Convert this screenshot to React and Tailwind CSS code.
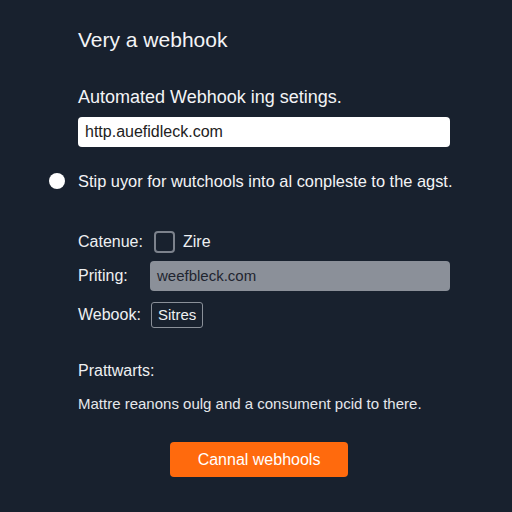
export default function App() {
  return (
    <div
      className="w-[512px] h-[512px] bg-[#18212e] text-white overflow-hidden"
      style={{ fontFamily: '"Liberation Sans", Arial, sans-serif' }}
    >
      <div className="pl-[78px] pr-[62px] pt-[28px]">
        <h1 className="text-[21px] leading-[24px] text-[#f3f4f6]">Very a webhook</h1>

        <p className="mt-[34px] text-[18px] leading-[22px] text-[#f3f4f6]">Automated Webhook ing setings.</p>
        <div className="mt-[9px] h-[30px] bg-white rounded-[4px] flex items-center px-[7px] text-[16px] text-[#222]">
          http.auefidleck.com
        </div>

        <div className="mt-[24px] -ml-[29px] flex items-center gap-[13px]">
          <span className="w-[16px] h-[16px] rounded-full bg-white shrink-0" />
          <span className="text-[16.4px] leading-[20px] whitespace-nowrap text-[#f3f4f6]">
            Stip uyor for wutchools into al conpleste to the agst.
          </span>
        </div>

        <div className="mt-[40px] flex flex-col">
          <div className="flex items-center h-[22px]">
            <span className="w-[76px] text-[16px] text-[#eef0f2]">Catenue:</span>
            <span className="w-[21px] h-[22px] rounded-[4px] border-2 border-[#7c828c]" />
            <span className="ml-[8px] text-[16px] text-[#eef0f2]">Zire</span>
          </div>
          <div className="mt-[8px] flex items-center">
            <span className="w-[72px] text-[16px] text-[#eef0f2]">Priting:</span>
            <div className="flex-1 h-[30px] rounded-[4px] bg-[#8b9099] flex items-center px-[7px] text-[15px] text-[#1f2530]">
              weefbleck.com
            </div>
          </div>
          <div className="mt-[11px] flex items-center">
            <span className="w-[73px] text-[16px] text-[#eef0f2]">Webook:</span>
            <span className="h-[26px] px-[6px] border border-[#8a9099] rounded-[3px] flex items-center text-[15px] text-[#eef0f2]">
              Sitres
            </span>
          </div>
        </div>

        <p className="mt-[33px] text-[16px] leading-[20px] text-[#eef0f2]">Prattwarts:</p>
        <p className="mt-[13px] text-[15px] leading-[20px] text-[#e5e7eb]">
          Mattre reanons oulg and a consument pcid to there.
        </p>

        <div className="mt-[28px] pl-[92px]">
          <button className="w-[178px] h-[35px] rounded-[4px] bg-[#ff6a0d] text-white text-[16px]">
            Cannal webhools
          </button>
        </div>
      </div>
    </div>
  );
}
